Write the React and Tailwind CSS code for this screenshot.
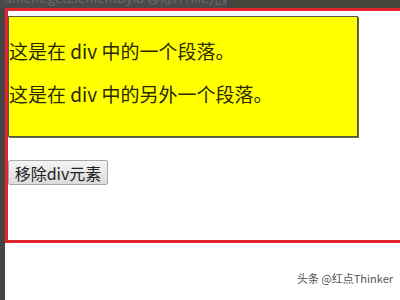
export default function App() {
  return (
    <div className="w-[400px] h-[300px] overflow-hidden bg-white flex flex-col" style={{ fontFamily: '"Noto Sans CJK SC", "Noto Sans", sans-serif' }}>
      {/* editor tab strip, mostly cut off */}
      <div className="h-[8px] flex shrink-0 overflow-hidden">
        <div className="w-[227px] bg-[#4a4a4c] overflow-hidden">
          <p className="mt-[-10px] pl-[4px] text-[13px] leading-[16px] text-[#6a6a6c] whitespace-nowrap">ument.getElementById 移除HTML元素</p>
        </div>
        <div className="flex-1 bg-[#44443b]" />
      </div>

      <div className="flex flex-1">
        <div className="w-[5px] bg-[#454545] shrink-0" />
        <div className="flex flex-col w-[395px] overflow-hidden">
          {/* red page frame */}
          <div className="w-[420px] h-[235px] shrink-0 border-t-[3px] border-l-[3px] border-b-[3px] border-[#e0242c] pt-[5px]">
            <div className="w-[350px] h-[121px] bg-[#ffff00] border border-[#55554a] shadow-[1px_1px_0_#6b6b3c] pt-[21px] flex flex-col gap-[18px]">
              <p className="text-[19px] leading-[25px] text-[#2a2a00]">这是在 div 中的一个段落。</p>
              <p className="text-[19px] leading-[25px] text-[#2a2a00]">这是在 div 中的另外一个段落。</p>
            </div>
            <button className="mt-[23px] w-[100px] h-[25px] rounded-[2px] border border-[#a8a8a8] bg-gradient-to-b from-[#f4f4f4] to-[#dcdcdc] text-[16px] leading-[20px] text-[#222] flex items-center justify-center">
              移除div元素
            </button>
          </div>
          <div className="flex-1 flex justify-end pr-[7px] pt-[28px]">
            <span className="text-[11px] leading-[14px] text-[#555] whitespace-nowrap">头条 @红点Thinker</span>
          </div>
        </div>
      </div>
    </div>
  )
}
